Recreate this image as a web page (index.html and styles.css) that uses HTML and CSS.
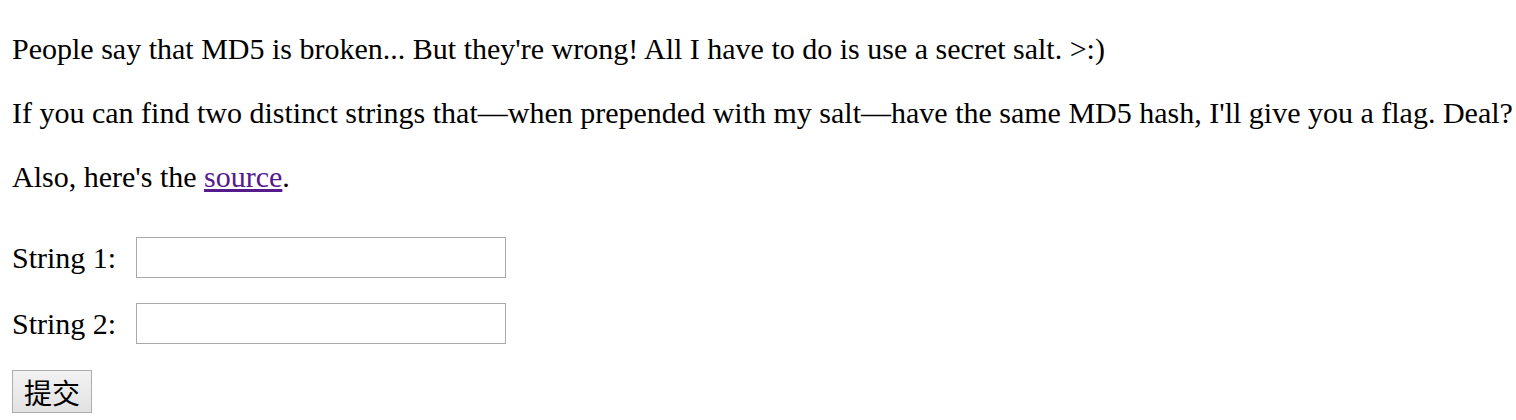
FILE: index.html
```html
<!DOCTYPE html>
<html>
<head>
<meta charset="utf-8">
<link rel="stylesheet" href="styles.css">
</head>
<body>
<p class="para">People say that MD5 is broken... But they're wrong! All I have to do is use a secret salt. &gt;:)</p>
<p class="para">If you can find two distinct strings that—when prepended with my salt—have the same MD5 hash, I'll give you a flag. Deal?</p>
<p class="para">Also, here's the <a class="link" href="#">source</a>.</p>
<form class="form">
  <div class="row"><label class="label">String 1:</label><input class="field" type="text"></div>
  <div class="row"><label class="label">String 2:</label><input class="field" type="text"></div>
  <button class="submit" type="button">提交</button>
</form>
</body>
</html>
```
FILE: styles.css
```css
html, body {
  margin: 0;
  padding: 0;
  background: #ffffff;
}
body {
  padding: 2px 0 0 12px;
  font-family: "Liberation Serif", "Times New Roman", serif;
  font-size: 30px;
  color: #000000;
}
.para {
  margin: 30px 0;
  line-height: 34px;
  white-space: nowrap;
}
.link {
  color: #551a8b;
  text-decoration: underline;
}
.form {
  display: flex;
  flex-direction: column;
  align-items: flex-start;
  gap: 25px;
  margin-top: 43px;
}
.row {
  display: flex;
  align-items: center;
  gap: 20px;
  height: 41px;
}
.label {
  font-size: 30px;
  width: 104px;
  white-space: nowrap;
}
.field {
  box-sizing: border-box;
  width: 370px;
  height: 41px;
  margin: 0;
  border: 1px solid #a9a9a9;
  font-size: 20px;
  padding: 2px 4px;
  background: #fff;
}
.submit {
  box-sizing: border-box;
  width: 80px;
  height: 43px;
  margin: 1px 0 0 0;
  padding: 0;
  border: 1px solid #adadad;
  border-radius: 0;
  background: linear-gradient(#f2f2f2, #e2e2e2);
  font-family: "Noto Sans CJK SC", sans-serif;
  font-size: 28px;
  line-height: 1;
  color: #000;
}
```
